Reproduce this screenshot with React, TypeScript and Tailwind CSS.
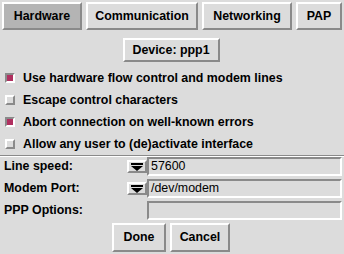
import { useState } from 'react';

const raised = 'border-2 border-t-white border-l-white border-b-[#8a8a8a] border-r-[#8a8a8a]';
const sunken = 'border-2 border-t-[#8a8a8a] border-l-[#8a8a8a] border-b-white border-r-white';

const tabs = [
  { label: 'Hardware', w: 'w-[80px]' },
  { label: 'Communication', w: 'w-[112px]' },
  { label: 'Networking', w: 'w-[90px]' },
  { label: 'PAP', w: 'w-[46px]' },
];

const options = [
  { label: 'Use hardware flow control and modem lines', on: true },
  { label: 'Escape control characters', on: false },
  { label: 'Abort connection on well-known errors', on: true },
  { label: 'Allow any user to (de)activate interface', on: false },
];

const Arrow = () => (
  <div className={`w-[20px] h-[13px] ${raised} flex items-center justify-center bg-[#dcdcdc]`}>
    <svg width="12" height="8" viewBox="0 0 12 8">
      <rect x="0" y="0" width="12" height="2" fill="#000" />
      <polygon points="0,3 12,3 6,8" fill="#000" />
    </svg>
  </div>
);

export default function App() {
  const [active, setActive] = useState('Hardware');
  const [checks, setChecks] = useState(options.map((o) => o.on));

  return (
    <div
      className="w-[344px] h-[254px] bg-[#dcdcdc] text-black text-[12.4px] font-bold overflow-hidden"
      style={{ fontFamily: '"Liberation Sans", Arial, sans-serif' }}
    >
      {/* Tabs */}
      <div className="flex gap-[4px] pl-[2px] pt-[2px]">
        {tabs.map((t) => (
          <button
            key={t.label}
            onClick={() => setActive(t.label)}
            className={`${t.w} h-[28px] ${raised} ${active === t.label ? 'bg-[#b4b4b4]' : 'bg-[#dcdcdc]'} flex items-center justify-center`}
          >
            {t.label}
          </button>
        ))}
      </div>

      {/* Device */}
      <div className="flex justify-center mt-[8px] pr-[2px]">
        <div className={`w-[97px] h-[24px] ${raised} flex items-center justify-center`}>Device: ppp1</div>
      </div>

      {/* Options */}
      <div className="flex flex-col mt-[5px]">
        {options.map((o, i) => (
          <label key={o.label} className="flex items-center h-[22px] pl-[5px] gap-[8px] cursor-pointer">
            <span
              onClick={() => setChecks(checks.map((c, j) => (j === i ? !c : c)))}
              className={`w-[10px] h-[10px] ${checks[i] ? sunken + ' bg-[#b03060]' : raised + ' bg-[#dcdcdc]'}`}
            />
            <span>{o.label}</span>
          </label>
        ))}
      </div>

      {/* Separator */}
      <div className="border-t border-t-[#8a8a8a] border-b border-b-white" />

      {/* Fields */}
      <div className="flex flex-col gap-[3px] pr-[2px]">
        {[
          { label: 'Line speed:', value: '57600', menu: true },
          { label: 'Modem Port:', value: '/dev/modem', menu: true },
          { label: 'PPP Options:', value: '', menu: false },
        ].map((f) => (
          <div key={f.label} className="flex items-center h-[19px]">
            <span className="w-[127px] pl-[4px]">{f.label}</span>
            <div className="w-[20px] flex items-center">{f.menu && <Arrow />}</div>
            <div className={`flex-1 h-[19px] ${sunken} flex items-center pl-[2px] font-normal`}>{f.value}</div>
          </div>
        ))}
      </div>

      {/* Buttons */}
      <div className="flex justify-center gap-[4px] mt-[3px] pr-[2px]">
        <button className={`w-[54px] h-[29px] ${raised} flex items-center justify-center`}>Done</button>
        <button className={`w-[60px] h-[29px] ${raised} flex items-center justify-center`}>Cancel</button>
      </div>
    </div>
  );
}
